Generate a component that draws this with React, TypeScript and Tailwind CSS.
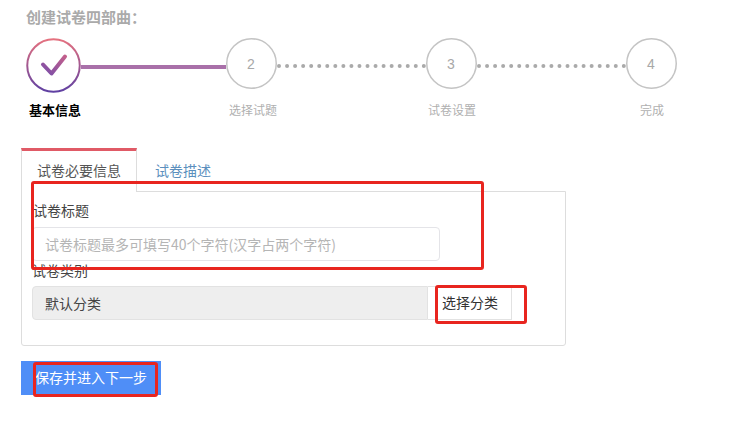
export default function App() {
  const font = "[font-family:'Noto_Sans_CJK_SC','Liberation_Sans',sans-serif]";
  return (
    <div className={`relative w-[730px] h-[436px] overflow-hidden bg-white ${font}`}>
      <div className="pt-[8px] pl-[21px] flex flex-col items-start">
        <div className="ml-[5px] h-[20px] leading-[18px] text-[15px] font-bold text-[#aaaaaa] whitespace-nowrap">创建试卷四部曲：</div>
        <div className="ml-[5px] mt-[10px] flex items-start">
          <svg width="55" height="55" viewBox="0 0 55 55" className="shrink-0">
            <defs>
              <linearGradient id="g" gradientUnits="userSpaceOnUse" x1="0" y1="0" x2="0" y2="55">
                <stop offset="0" stopColor="#e8727e" />
                <stop offset="1" stopColor="#5c3fa3" />
              </linearGradient>
              <linearGradient id="c" gradientUnits="userSpaceOnUse" x1="38" y1="18" x2="25" y2="37">
                <stop offset="0" stopColor="#c25f8c" />
                <stop offset="1" stopColor="#8350a5" />
              </linearGradient>
            </defs>
            <circle cx="27.5" cy="27.5" r="26.25" fill="none" stroke="url(#g)" strokeWidth="2" />
            <path d="M17 26.5 L25.5 35.5 L39 18.5" fill="none" stroke="url(#c)" strokeWidth="4" strokeLinecap="round" strokeLinejoin="round" />
          </svg>
          <div className="w-[145px] h-[4px] mt-[27px] bg-[#a970a9]" />
          <Circle n="2" />
          <Dots />
          <Circle n="3" />
          <Dots />
          <Circle n="4" />
        </div>
        <div className="mt-[7px] h-[20px] flex items-center">
          <div className="ml-[8px] w-[52px] text-[13px] leading-[20px] font-bold text-black whitespace-nowrap">基本信息</div>
          <Label cls="ml-[148px] w-[48px]" text="选择试题" />
          <Label cls="ml-[151px] w-[48px]" text="试卷设置" />
          <Label cls="ml-[164px] w-[24px]" text="完成" />
        </div>
        <div className="mt-[28px] w-[545px]">
          <div className="flex h-[44px] relative z-10">
            <div className="w-[116px] h-[44px] border-t-[3px] border-t-[#e05a66] border-x border-x-[#dddddd] bg-white pl-[15px] pt-[9px] text-[14px] leading-[20px] text-[#555555]">试卷必要信息</div>
            <div className="pl-[18px] pt-[12px] text-[14px] leading-[20px] text-[#5b8fbd]">试卷描述</div>
          </div>
          <div className="-mt-[1px] h-[155px] border border-[#dddddd] rounded-b-[3px] pl-[10px] pt-[8px]">
            <div className="h-[20px] pl-[1px] leading-[20px] text-[14px] text-[#444444]">试卷标题</div>
            <div className="mt-[7px] w-[408px] h-[34px] border border-[#e4e4e8] rounded-[4px] pl-[12px] leading-[32px] text-[14px] text-[#b5b5b5]">试卷标题最多可填写40个字符(汉字占两个字符)</div>
            <div className="-mt-[1px] h-[20px] leading-[20px] text-[14px] text-[#444444]">试卷类别</div>
            <div className="mt-[6px] flex h-[34px]">
              <div className="w-[396px] bg-[#eeeeee] border border-[#e2e2e2] rounded-l-[4px] pl-[12px] leading-[32px] text-[14px] text-[#444444]">默认分类</div>
              <div className="w-[84px] border border-l-0 border-[#e2e2e2] pl-[14px] leading-[30px] text-[14px] text-[#333333]">选择分类</div>
            </div>
          </div>
        </div>
        <div className="mt-[15px] w-[140px] h-[34px] bg-[#4f8ef7] pl-[14px] leading-[32px] text-[14px] text-white">保存并进入下一步</div>
      </div>
      <div className="absolute left-[31px] top-[181px] w-[453px] h-[89px] border-[3px] border-[#e8251f] rounded-[3px] z-20" />
      <div className="absolute left-[435px] top-[285px] w-[92px] h-[39px] border-[3px] border-[#e8251f] rounded-[3px] z-20" />
      <div className="absolute left-[33px] top-[362px] w-[125px] h-[35px] border-[3px] border-[#e8251f] rounded-[3px] z-20" />
    </div>
  );
}

function Circle({ n }: { n: string }) {
  return (
    <svg width="51" height="51" viewBox="0 0 51 51" className="shrink-0">
      <circle cx="25.5" cy="25.5" r="24.75" fill="none" stroke="#c4c4c4" strokeWidth="1.5" />
      <text x="25" y="30.5" textAnchor="middle" fontSize="14" fill="#a8a8a8" fontFamily="'Liberation Sans', sans-serif">{n}</text>
    </svg>
  );
}

function Dots() {
  return <div className="w-[149px] h-0 mt-[26px] border-t-4 border-dotted border-[#aaaaaa]" />;
}

function Label({ cls, text }: { cls: string; text: string }) {
  return <div className={`${cls} text-[12px] leading-[20px] text-[#b0b0b0] whitespace-nowrap`}>{text}</div>;
}
